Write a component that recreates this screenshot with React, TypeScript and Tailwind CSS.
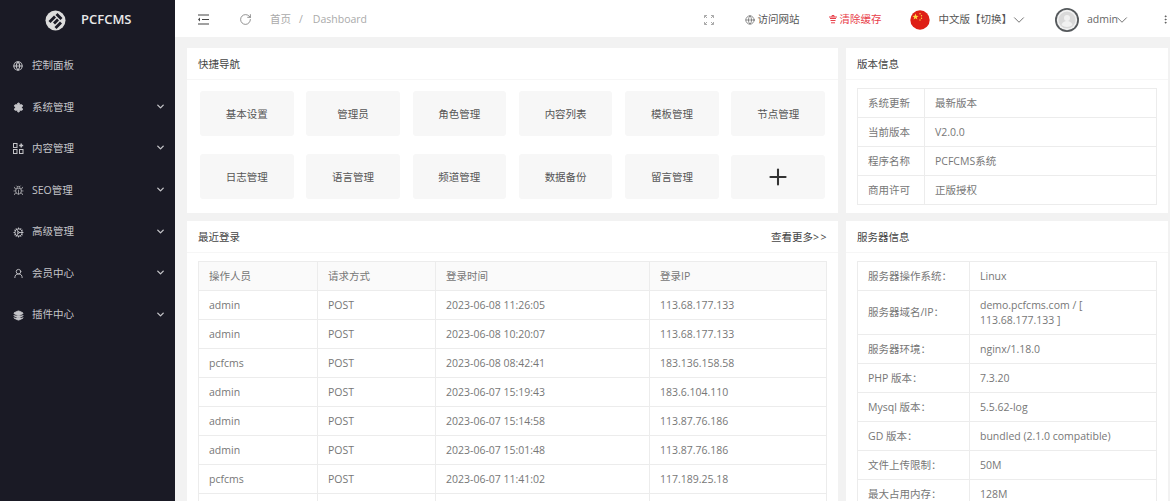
import React from "react";
import { ChevronDown, Globe, UserRound, Layers, Settings, Cog, Bug, RotateCw, Plus, EllipsisVertical } from "lucide-react";

const menu: { t: string; icon: React.ReactNode; arrow?: boolean }[] = [
  { t: "控制面板", icon: <Globe size={10} strokeWidth={2.5} /> },
  { t: "系统管理", icon: <Settings size={11} strokeWidth={2} fill="currentColor" />, arrow: true },
  {
    t: "内容管理",
    arrow: true,
    icon: (
      <svg width="11" height="11" viewBox="0 0 11 11" fill="none" stroke="currentColor" strokeWidth="1">
        <rect x="0.5" y="0.5" width="3.5" height="4" />
        <rect x="0.5" y="6.500" width="3.5" height="4" />
        <rect x="6.5" y="6.500" width="3.5" height="4" />
        <path d="M8.2 0.5v4M6.2 2.5h4" strokeWidth="1.5" />
      </svg>
    ),
  },
  { t: "SEO管理", icon: <Bug size={11} strokeWidth={1.5} />, arrow: true },
  { t: "高级管理", icon: <Cog size={11} strokeWidth={2} />, arrow: true },
  { t: "会员中心", icon: <UserRound size={11} strokeWidth={2} />, arrow: true },
  { t: "插件中心", icon: <Layers size={11} strokeWidth={2} fill="currentColor" />, arrow: true },
];

const tiles = ["基本设置", "管理员", "角色管理", "内容列表", "模板管理", "节点管理", "日志管理", "语言管理", "频道管理", "数据备份", "留言管理"];

const logins = [
  ["admin", "POST", "2023-06-08 11:26:05", "113.68.177.133"],
  ["admin", "POST", "2023-06-08 10:20:07", "113.68.177.133"],
  ["pcfcms", "POST", "2023-06-08 08:42:41", "183.136.158.58"],
  ["admin", "POST", "2023-06-07 15:19:43", "183.6.104.110"],
  ["admin", "POST", "2023-06-07 15:14:58", "113.87.76.186"],
  ["admin", "POST", "2023-06-07 15:01:48", "113.87.76.186"],
  ["pcfcms", "POST", "2023-06-07 11:41:02", "117.189.25.18"],
  ["", "", "", ""],
];

const version = [
  ["系统更新", "最新版本"],
  ["当前版本", "V2.0.0"],
  ["程序名称", "PCFCMS系统"],
  ["商用许可", "正版授权"],
];

const server = [
  ["服务器操作系统：", "Linux"],
  ["服务器域名/IP：", "demo.pcfcms.com / [ 113.68.177.133 ]"],
  ["服务器环境：", "nginx/1.18.0"],
  ["PHP 版本：", "7.3.20"],
  ["Mysql 版本：", "5.5.62-log"],
  ["GD 版本：", "bundled (2.1.0 compatible)"],
  ["文件上传限制：", "50M"],
  ["最大占用内存：", "128M"],
];

function Logo() {
  return (
    <svg width="21" height="21" viewBox="0 0 21 21">
      <circle cx="10.5" cy="10.5" r="10" fill="#dcdcdc" />
      <path d="M3.5 11 L9 5.5 L11 7.5 L5.5 13 Z M8 12.500 L12 8.500 L14 10.500 L10 14.500 Z M9.500 17 L15 11.500 L17 13.500 L11.500 19 Z M10.500 5 L12.500 3 L17.500 8 L15.500 10 Z" fill="#1a1a25" />
    </svg>
  );
}

function Flag() {
  return (
    <svg width="20" height="20" viewBox="0 0 20 20">
      <circle cx="10" cy="10" r="9.7" fill="#de1f16" />
      <path d="M5.5 3.6l.8 2.2 2.3.1-1.8 1.4.6 2.2-1.9-1.3-1.9 1.3.6-2.2L2.4 5.900l2.3-.1z" fill="#ffda44" />
      <circle cx="10" cy="3.800" r=".7" fill="#ffda44" />
      <circle cx="11.500" cy="5.800" r=".7" fill="#ffda44" />
      <circle cx="11.500" cy="8.200" r=".7" fill="#ffda44" />
      <circle cx="10" cy="10" r=".7" fill="#ffda44" />
    </svg>
  );
}

function Avatar() {
  return (
    <svg width="24" height="24" viewBox="0 0 24 24">
      <circle cx="12" cy="12" r="12" fill="#55595c" />
      <circle cx="12" cy="12" r="10.2" fill="#f2f2f2" />
      <circle cx="12" cy="12" r="8.6" fill="#d9d9d9" />
      <circle cx="12" cy="10" r="3" fill="#f1f1f1" />
      <path d="M6.500 17c1-3 3-4 5.500-4s4.500 1 5.500 4c-3 2.500-8 2.500-11 0z" fill="#f1f1f1" />
    </svg>
  );
}

function Card({ title, right, children, className }: { title: string; right?: React.ReactNode; children: React.ReactNode; className?: string }) {
  return (
    <section className={"bg-white " + (className ?? "")}>
      <div className="h-[32px] px-[11px] pt-[2px] flex items-center justify-between border-b border-[#f6f6f6] text-[10.5px] text-[#444]">
        <span>{title}</span>
        {right}
      </div>
      {children}
    </section>
  );
}

const cell = "border border-[#ececec] pl-[10px] pr-[8px] text-[10.5px] leading-[15px] text-[#777] font-normal text-left";
const td = cell + " h-[29px]";
const tdWrap = cell + " py-[6.5px]";

export default function App() {
  return (
    <div className="flex h-screen overflow-hidden bg-[#f2f2f2] font-['Open_Sans','Noto_Sans_CJK_SC',sans-serif]">
      <aside className="w-[175px] shrink-0 bg-[#1a1a25] text-[#c4c4c8]">
        <div className="h-[40px] flex items-center pl-[45px] gap-[15px]">
          <Logo />
          <span className="text-[13px] font-semibold text-[#e8e8e8]">PCFCMS</span>
        </div>
        <nav className="pt-[5px]">
          {menu.map((m) => (
            <div key={m.t} className="h-[41.6px] flex items-center pl-[13px] pr-[9px] text-[10.5px]">
              <span className="w-[19px] flex items-center">{m.icon}</span>
              <span className="flex-1">{m.t}</span>
              {m.arrow && <ChevronDown size={11} strokeWidth={3} className="-mt-[2px]" />}
            </div>
          ))}
        </nav>
      </aside>

      <div className="flex-1 min-w-0">
        <header className="h-[37px] pt-[2px] bg-white flex items-center text-[10.5px] text-[#555]">
          <svg className="ml-[22px]" width="13" height="11" viewBox="0 0 13 11" fill="none" stroke="#444" strokeWidth="1.1">
            <path d="M1 1h11M5 5.500h7M1 10h11" />
            <path d="M3 3.500L1 5.500l2 2z" fill="#444" stroke="none" />
          </svg>
          <RotateCw size={13} strokeWidth={1.3} className="ml-[29px] text-[#666]" />
          <span className="ml-[18px] text-[#aaa]">首页</span>
          <span className="ml-[8px] text-[#aaa]">/</span>
          <span className="ml-[10px] text-[#aaa]">Dashboard</span>
          <div className="flex-1" />
          <svg width="10" height="10" viewBox="0 0 10 10" fill="none" stroke="#aaa" strokeWidth="1">
            <path d="M.5 3V.5H3M.5.500l2.500 2.500M7 .5h2.500V3M9.500.5L7 3M.5 7v2.500H3M.5 9.500L3 7M7 9.500h2.500V7M9.500 9.500L7 7" />
          </svg>
          <span className="ml-[31px] flex items-center gap-[2px] text-[#555]">
            <Globe size={10} strokeWidth={1.5} />
            访问网站
          </span>
          <span className="ml-[30px] flex items-center gap-[2px] text-[#e8404a]">
            <svg width="8" height="9" viewBox="0 0 8 9" fill="none" stroke="#e8404a" strokeWidth="1">
              <path d="M0 2h8M3 2V.5h2V2M1 3.500h6M1.500 5.500h5M2 7.800h4" />
            </svg>
            清除缓存
          </span>
          <span className="ml-[29px] mt-[1px]"><Flag /></span>
          <span className="ml-[8px] text-[#555]">中文版【切换】</span>
          <ChevronDown size={18} strokeWidth={1} className="-ml-[2px] text-[#444]" />
          <span className="ml-[27px] mt-[1px]"><Avatar /></span>
          <span className="ml-[8px] text-[#666]">admin</span>
          <ChevronDown size={18} strokeWidth={1} className="-ml-[5px] text-[#444]" />
          <EllipsisVertical size={11} className="ml-[29px] -mr-[1px] text-[#555]" />
        </header>

        <main className="pt-[11px] pl-[12px] pr-[2px] grid grid-cols-[651px_322px] gap-x-[8px] gap-y-[8px] items-start">
          <Card title="快捷导航" className="h-[165px]">
            <div className="grid grid-cols-6 gap-x-[12.6px] gap-y-[18px] px-[13px] pt-[11px]">
              {tiles.map((t) => (
                <div key={t} className="h-[45px] pt-[2px] rounded-[3px] bg-[#f7f7f7] flex items-center justify-center text-[10.5px] text-[#555]">{t}</div>
              ))}
              <div className="h-[44px] mt-[1px] rounded-[3px] bg-[#f7f7f7] flex items-center justify-center text-[#333]">
                <Plus size={26} strokeWidth={1.9} />
              </div>
            </div>
          </Card>
          <Card title="版本信息" className="h-[165px]">
            <div className="px-[11px] pt-[8px]">
              <table className="w-full table-fixed border-collapse">
                <colgroup><col className="w-[67px]" /><col /></colgroup>
                <tbody>
                  {version.map(([a, b]) => (
                    <tr key={a}><td className={td}>{a}</td><td className={td}>{b}</td></tr>
                  ))}
                </tbody>
              </table>
            </div>
          </Card>

          <Card title="最近登录" className="h-[400px]" right={<span className="whitespace-nowrap text-[10.5px] text-[#444]">查看更多<span className="tracking-[1.5px] -mr-[1px]">&gt;&gt;</span></span>}>
            <div className="px-[11px] pt-[8px]">
              <table className="w-full table-fixed border-collapse">
                <colgroup><col className="w-[119px]" /><col className="w-[118px]" /><col className="w-[214px]" /><col /></colgroup>
                <thead className="bg-[#fafafa]">
                  <tr>
                    {["操作人员", "请求方式", "登录时间", "登录IP"].map((h) => <th key={h} className={td}>{h}</th>)}
                  </tr>
                </thead>
                <tbody>
                  {logins.map((r, n) => (
                    <tr key={n}>{r.map((c, i) => <td key={i} className={td}>{c}</td>)}</tr>
                  ))}
                </tbody>
              </table>
            </div>
          </Card>
          <Card title="服务器信息" className="h-[400px]">
            <div className="px-[11px] pt-[8px]">
              <table className="w-full table-fixed border-collapse">
                <colgroup><col className="w-[112px]" /><col /></colgroup>
                <tbody>
                  {server.map(([a, b]) => (
                    <tr key={a}><td className={tdWrap}>{a}</td><td className={tdWrap}>{b}</td></tr>
                  ))}
                </tbody>
              </table>
            </div>
          </Card>
        </main>
      </div>
    </div>
  );
}
